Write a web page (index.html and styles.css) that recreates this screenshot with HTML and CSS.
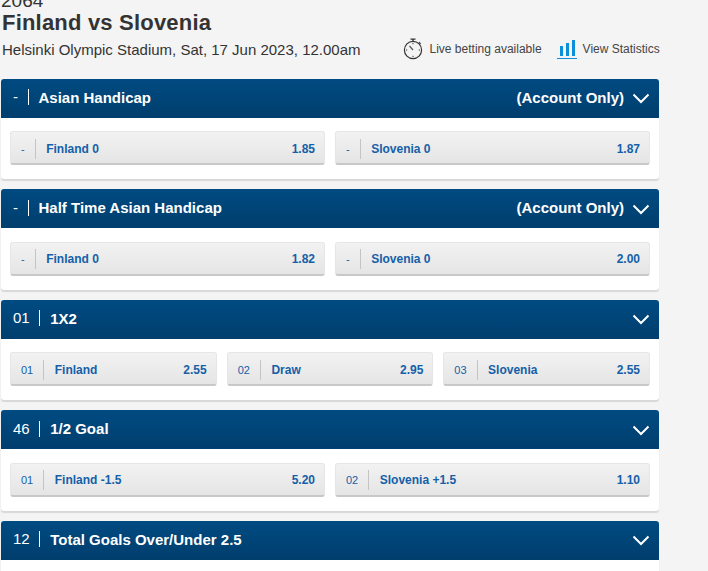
FILE: index.html
```html
<!DOCTYPE html>
<html>
<head>
    <title>Finland vs Slovenia</title>
    <link rel="stylesheet" href="styles.css">
</head>
<body>
    <div class="container">
        <div class="event-code">2064</div>
        <h1>Finland vs Slovenia</h1>
        <div class="event-info">
            <div class="venue">Helsinki Olympic Stadium, Sat, 17 Jun 2023, 12.00am</div>
            <div class="event-link live">
                <svg width="22" height="22" viewBox="0 0 22 22" fill="none" stroke="#333" stroke-width="1.2">
                    <circle cx="11" cy="12" r="8.6"/>
                    <path d="M8.5 1.2h5M11 1.2v2.2M17 4.2l1.6 1.6"/>
                    <path d="M11 12L7.5 8" stroke="#555"/>
                    <path d="M11 5v1.2M11 17.8V19M4 12h1.2M16.8 12H18" stroke-width="1"/>
                </svg>
                <span>Live betting available</span>
            </div>
            <div class="event-link stats">
                <svg width="20" height="21" viewBox="0 0 20 21">
                    <rect x="3" y="7" width="3" height="10" fill="#0a8fd8"/>
                    <rect x="9" y="4" width="3" height="13" fill="#0a8fd8"/>
                    <rect x="15" y="1" width="3" height="16" fill="#0a8fd8"/>
                    <rect x="0" y="19" width="20" height="1" fill="#0a8fd8"/>
                </svg>
                <span>View Statistics</span>
            </div>
        </div>

        <div class="market">
            <div class="market-head">
                <span class="market-code">-</span>
                <span class="market-name">Asian Handicap</span>
                <span class="market-note">(Account Only)</span>
                <svg class="chevron" width="18" height="11" viewBox="0 0 18 11" fill="none" stroke="#fff" stroke-width="2"><path d="M1.5 1.5l7.5 7.5 7.5-7.5"/></svg>
            </div>
            <div class="market-body">
                <div class="odd"><span class="odd-code">-</span><span class="odd-name">Finland 0</span><span class="odd-price">1.85</span></div>
                <div class="odd"><span class="odd-code">-</span><span class="odd-name">Slovenia 0</span><span class="odd-price">1.87</span></div>
            </div>
        </div>

        <div class="market">
            <div class="market-head">
                <span class="market-code">-</span>
                <span class="market-name">Half Time Asian Handicap</span>
                <span class="market-note">(Account Only)</span>
                <svg class="chevron" width="18" height="11" viewBox="0 0 18 11" fill="none" stroke="#fff" stroke-width="2"><path d="M1.5 1.5l7.5 7.5 7.5-7.5"/></svg>
            </div>
            <div class="market-body">
                <div class="odd"><span class="odd-code">-</span><span class="odd-name">Finland 0</span><span class="odd-price">1.82</span></div>
                <div class="odd"><span class="odd-code">-</span><span class="odd-name">Slovenia 0</span><span class="odd-price">2.00</span></div>
            </div>
        </div>

        <div class="market">
            <div class="market-head">
                <span class="market-code">01</span>
                <span class="market-name">1X2</span>
                <svg class="chevron" width="18" height="11" viewBox="0 0 18 11" fill="none" stroke="#fff" stroke-width="2"><path d="M1.5 1.5l7.5 7.5 7.5-7.5"/></svg>
            </div>
            <div class="market-body">
                <div class="odd"><span class="odd-code">01</span><span class="odd-name">Finland</span><span class="odd-price">2.55</span></div>
                <div class="odd"><span class="odd-code">02</span><span class="odd-name">Draw</span><span class="odd-price">2.95</span></div>
                <div class="odd"><span class="odd-code">03</span><span class="odd-name">Slovenia</span><span class="odd-price">2.55</span></div>
            </div>
        </div>

        <div class="market">
            <div class="market-head">
                <span class="market-code">46</span>
                <span class="market-name">1/2 Goal</span>
                <svg class="chevron" width="18" height="11" viewBox="0 0 18 11" fill="none" stroke="#fff" stroke-width="2"><path d="M1.5 1.5l7.5 7.5 7.5-7.5"/></svg>
            </div>
            <div class="market-body">
                <div class="odd"><span class="odd-code">01</span><span class="odd-name">Finland -1.5</span><span class="odd-price">5.20</span></div>
                <div class="odd"><span class="odd-code">02</span><span class="odd-name">Slovenia +1.5</span><span class="odd-price">1.10</span></div>
            </div>
        </div>

        <div class="market">
            <div class="market-head">
                <span class="market-code">12</span>
                <span class="market-name">Total Goals Over/Under 2.5</span>
                <svg class="chevron" width="18" height="11" viewBox="0 0 18 11" fill="none" stroke="#fff" stroke-width="2"><path d="M1.5 1.5l7.5 7.5 7.5-7.5"/></svg>
            </div>
            <div class="market-body"></div>
        </div>
    </div>
</body>
</html>
```

FILE: styles.css
```css
html, body {
    height: 571px;
    overflow: hidden;
}
body {
    font-family: "Liberation Sans", Arial, sans-serif;
    margin: 0;
    background-color: #f4f4f4;
    color: #333;
}
.container {
    width: 658px;
    margin: -9px 0 0 1px;
}
.event-code {
    font-size: 19px;
    line-height: 20px;
}
h1 {
    margin: 0;
    padding-left: 1px;
    font-size: 22px;
    line-height: 24px;
    font-weight: bold;
    letter-spacing: 0.2px;
}
.event-info {
    display: flex;
    align-items: center;
    height: 28px;
    margin-bottom: 15.75px;
    font-size: 12px;
}
.venue {
    padding-left: 1px;
    font-size: 15px;
    margin-right: 41px;
    white-space: nowrap;
}
.event-link {
    display: flex;
    align-items: center;
    gap: 6px;
    color: #444;
    white-space: nowrap;
}
.live {
    margin-right: 15px;
}
.market {
    margin-bottom: 10px;
    border-radius: 3px;
    background-color: #fff;
    box-shadow: 0 2px 1px #d8d8d8;
}
.market-head {
    display: flex;
    align-items: center;
    height: 39px;
    padding: 0 9px 2px 12px;
    box-sizing: border-box;
    border-radius: 3px 3px 0 0;
    background: linear-gradient(#004b82, #003e6d);
    color: #fff;
    font-size: 15px;
    font-weight: bold;
}
.market-code {
    padding-right: 9.5px;
    border-right: 1px solid #fff;
    font-weight: normal;
    line-height: 16px;
}
.market-name {
    margin-left: 10px;
}
.market-note {
    margin-left: auto;
    margin-right: 8px;
}
.chevron {
    margin-left: auto;
    margin-top: 3px;
}
.market-note + .chevron {
    margin-left: 0;
}
.market-body {
    display: flex;
    gap: 10px;
    padding: 13.5px 9px;
    min-height: 61.5px;
    box-sizing: border-box;
}
.odd {
    flex: 1;
    display: flex;
    align-items: center;
    height: 34px;
    padding: 2px 9px 0 10px;
    box-sizing: border-box;
    border: 1px solid #e6e6e6;
    border-bottom: 2px solid #c8c8c8;
    border-radius: 3px;
    background: linear-gradient(#f2f2f2, #e5e5e5);
    color: #1560a8;
    font-size: 12px;
    font-weight: bold;
    white-space: nowrap;
}
.odd-code {
    padding: 3px 10px 3px 0;
    border-right: 1px solid #c4c4c4;
    font-weight: normal;
    font-size: 11px;
    line-height: 14px;
}
.odd-name {
    margin-left: 10.5px;
}
.odd-price {
    margin-left: auto;
}
```
